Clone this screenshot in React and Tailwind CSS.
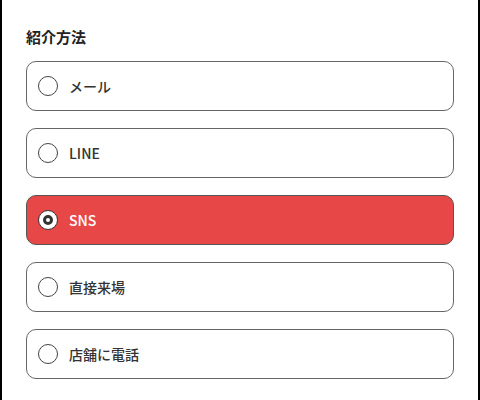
import { useState } from "react"

const options = ["メール", "LINE", "SNS", "直接来場", "店舗に電話"]

const Radio = ({ checked }) => {
  if (checked) {
    return (
      <span className="flex h-[20px] w-[20px] shrink-0 items-center justify-center rounded-full border-[1.5px] border-[#333] bg-white">
        <span className="h-[10px] w-[10px] rounded-full border-[3px] border-[#333] bg-white"></span>
      </span>
    )
  }
  return <span className="h-[20px] w-[20px] shrink-0 rounded-full border-[1.5px] border-[#444] bg-white"></span>
}

export default function App() {
  const [selected, setSelected] = useState("SNS")

  return (
    <div
      className="h-[400px] w-[480px] overflow-hidden border-x-2 border-black bg-white px-6 pt-[26px]"
      style={{ fontFamily: '"Noto Sans CJK JP", "Noto Sans", sans-serif' }}
    >
      <h2 className="mb-[13px] text-[15px] font-bold leading-[22px] text-[#222]">紹介方法</h2>
      <div className="flex flex-col gap-[17px]">
        {options.map((opt) => {
          const active = opt === selected
          return (
            <button
              key={opt}
              onClick={() => setSelected(opt)}
              className={
                active
                  ? "flex h-[50px] items-center gap-[11px] rounded-[10px] border-[1.5px] border-[#555] bg-[#e84747] px-[11px] text-left text-[14px] font-medium text-white"
                  : "flex h-[50px] items-center gap-[11px] rounded-[10px] border-[1.5px] border-[#666] bg-white px-[11px] text-left text-[14px] font-medium text-[#333]"
              }
            >
              <Radio checked={active} />
              <span>{opt}</span>
            </button>
          )
        })}
      </div>
    </div>
  )
}
